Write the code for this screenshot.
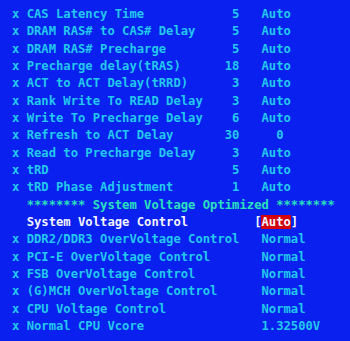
const timing = [
  ['CAS Latency Time', '5', 'Auto'],
  ['DRAM RAS# to CAS# Delay', '5', 'Auto'],
  ['DRAM RAS# Precharge', '5', 'Auto'],
  ['Precharge delay(tRAS)', '18', 'Auto'],
  ['ACT to ACT Delay(tRRD)', '3', 'Auto'],
  ['Rank Write To READ Delay', '3', 'Auto'],
  ['Write To Precharge Delay', '6', 'Auto'],
  ['Refresh to ACT Delay', '30', '  0'],
  ['Read to Precharge Delay', '3', 'Auto'],
  ['tRD', '5', 'Auto'],
  ['tRD Phase Adjustment', '1', 'Auto'],
]

const voltage = [
  ['DDR2/DDR3 OverVoltage Control', 'Normal'],
  ['PCI-E OverVoltage Control', 'Normal'],
  ['FSB OverVoltage Control', 'Normal'],
  ['(G)MCH OverVoltage Control', 'Normal'],
  ['CPU Voltage Control', 'Normal'],
  ['Normal CPU Vcore', '1.32500V'],
]

function Line({ children, className = '' }) {
  return <div className={`h-[17.33px] leading-[17.33px] whitespace-pre ${className}`}>{children}</div>
}

export default function App() {
  return (
    <div
      className="w-[350px] h-[341px] overflow-hidden bg-[#0a20ee] pl-[12px] pt-[6px] text-[12.2px] font-bold text-[#22c8ee]"
      style={{ fontFamily: '"DejaVu Sans Mono", "Liberation Mono", monospace' }}
    >
      {timing.map(([name, val, set]) => (
        <Line key={name}>
          {('x ' + name).padEnd(29) + val.padStart(2) + '   ' + set}
        </Line>
      ))}
      <Line className="text-[#2ae0bc]">{'  ******** System Voltage Optimized ********'}</Line>
      <Line className="text-[#f2f4ff]">
        {'  System Voltage Control'.padEnd(33) + '['}
        <span className="bg-[#d4000e]">Auto</span>
        {']'}
      </Line>
      {voltage.map(([name, set]) => (
        <Line key={name}>{('x ' + name).padEnd(34) + set}</Line>
      ))}
    </div>
  )
}
